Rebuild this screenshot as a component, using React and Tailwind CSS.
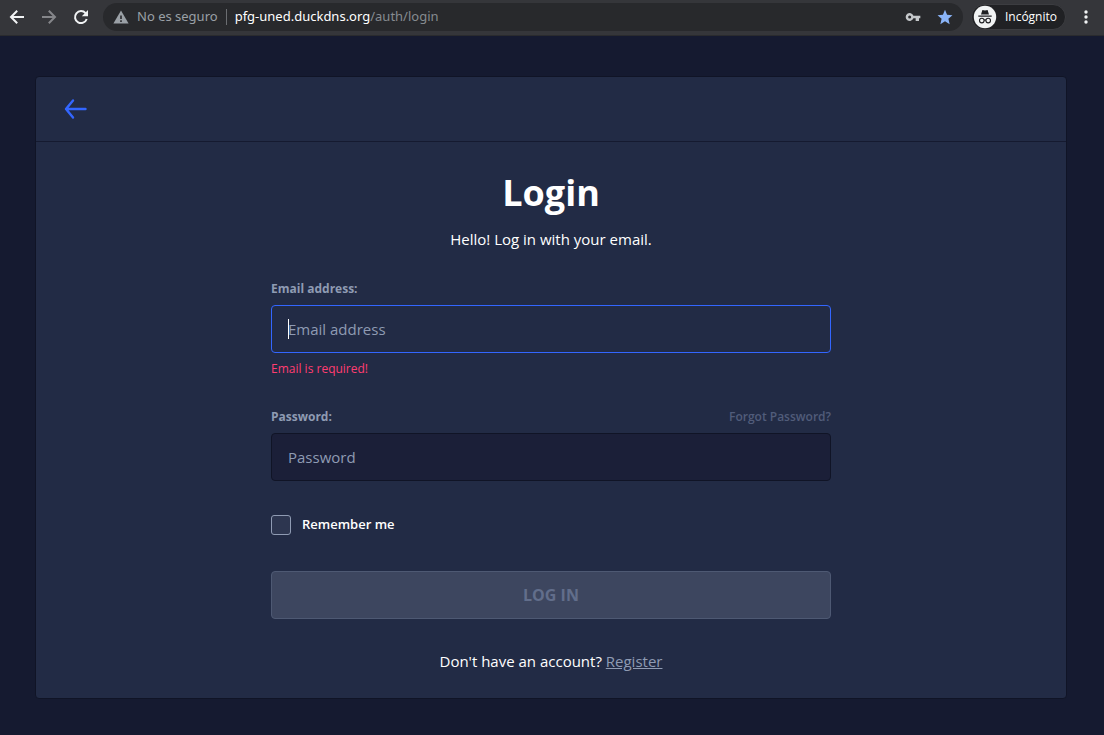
import React from "react";

function BrowserBar() {
  return (
    <header className="flex h-9 shrink-0 items-center border-b border-[#2a2b2e] bg-[#35363a] pr-2.5 pb-px pl-[9px] font-['Noto_Sans',sans-serif]">
      <button type="button" aria-label="Atrás" className="flex size-4 items-center justify-center">
        <svg viewBox="0 0 16 16" className="size-4" fill="none" stroke="#f1f3f4" strokeWidth="2">
          <path d="M15 8H3M8.2 1.8 2 8l6.2 6.2" />
        </svg>
      </button>
      <button type="button" aria-label="Adelante" className="ml-4 flex size-4 items-center justify-center">
        <svg viewBox="0 0 16 16" className="size-4" fill="none" stroke="#85868a" strokeWidth="2">
          <path d="M1 8H13M7.8 1.8 14 8l-6.2 6.2" />
        </svg>
      </button>
      <button type="button" aria-label="Recargar" className="ml-4 flex size-4 items-center justify-center">
        <svg viewBox="0 0 16 16" className="size-4">
          <path d="M12.6 4.2A6 6 0 1 0 13.7 10" fill="none" stroke="#f1f3f4" strokeWidth="2" />
          <path d="M15 1v6.2H8.8z" fill="#f1f3f4" />
        </svg>
      </button>
      <div className="ml-3.5 flex h-7 flex-1 items-center rounded-full bg-[#28292c] px-2.5 text-[13px]">
        <svg viewBox="0 0 16 14" className="h-3.5 w-4" aria-hidden="true">
          <path d="M8 0.5 15.6 13.5H0.4z" fill="#9aa0a6" />
          <path d="M7.2 5.5h1.6v3.6H7.2zM7.2 10.3h1.6v1.6H7.2z" fill="#28292c" />
        </svg>
        <span className="ml-2 text-[#9aa0a6]">No es seguro</span>
        <span className="mx-2 h-4 w-px bg-[#6b6d71]" />
        <span className="flex-1 text-[#868b90]">
          <span className="text-white">pfg-uned.duckdns.org</span>/auth/login
        </span>
        <button type="button" aria-label="Contraseñas">
          <svg viewBox="0 0 24 24" className="size-4" fill="#c4c7ca">
            <path d="M12.65 10A6 6 0 1 0 12.65 14H16v4h5v-4h2v-4zM7 14.3a2.3 2.3 0 1 1 0-4.6 2.3 2.3 0 0 1 0 4.6z" />
          </svg>
        </button>
        <button type="button" aria-label="Favorito" className="ml-4">
          <svg viewBox="0 0 24 24" className="size-4" fill="#8ab4f8">
            <path d="M12 18.2 19 22.8 17.1 14.8 23.2 9.4 15.1 8.7 12 1.2 8.9 8.7 0.8 9.4 6.9 14.8 5 22.8z" />
          </svg>
        </button>
      </div>
      <button type="button" className="ml-2 flex h-[26px] items-center rounded-full border border-[#3c3d41] bg-[#202124] pr-2 pl-px font-['Open_Sans',sans-serif] text-xs text-white">
        <svg viewBox="0 0 24 24" className="mr-2 size-6" aria-hidden="true">
          <circle cx="12" cy="12" r="11.2" fill="#f1f3f4" />
          <path d="M8 9.6 9.4 5 12 5.6 14.6 5 16 9.6zM5.3 10.6h13.4v1.2H5.3z" fill="#202124" />
          <g fill="none" stroke="#202124" strokeWidth="1.1">
            <circle cx="8.8" cy="15.6" r="2.3" />
            <circle cx="15.2" cy="15.6" r="2.3" />
            <path d="M11 15.2q1-.6 2 0" />
          </g>
        </svg>
        Incógnito
      </button>
      <button type="button" aria-label="Menú" className="ml-3">
        <svg viewBox="0 0 16 16" className="size-4" fill="#f1f3f4">
          <circle cx="8" cy="3" r="1.7" />
          <circle cx="8" cy="8" r="1.7" />
          <circle cx="8" cy="13" r="1.7" />
        </svg>
      </button>
    </header>
  );
}

export default function App() {
  return (
    <div className="flex min-h-screen flex-col bg-[#151a30] font-['Open_Sans',sans-serif] text-white">
      <BrowserBar />
      <main className="pt-10 pr-[37px] pb-9 pl-[35px]">
        <section className="rounded border border-[#101426] bg-[#222b45]">
          <nav className="flex h-[65px] items-center border-b border-[#151a30] px-6">
            <a href="#back" aria-label="Back" className="p-1">
              <svg viewBox="0 0 24 24" className="h-6 w-6" fill="none" stroke="#3366ff" strokeWidth="2.4" strokeLinecap="round" strokeLinejoin="round">
                <path d="M21.5 12H2M9 3.5 2 12l7 8.5" />
              </svg>
            </a>
          </nav>
          <form className="mx-auto max-w-[560px] pt-[27px] pb-[25px]" onSubmit={(e) => e.preventDefault()}>
            <h1 className="text-center text-4xl/12 font-bold">Login</h1>
            <p className="mt-2.5 text-center text-[15px]/6">Hello! Log in with your email.</p>

            <div className="mt-[26px]">
              <label htmlFor="email" className="block text-xs/6 font-bold text-[#8f9bb3]">
                Email address:
              </label>
              <div className="relative mt-1">
                <input
                  id="email"
                  type="email"
                  placeholder="Email address"
                  className="block h-12 w-full rounded border border-[#3366ff] bg-[#222b45] px-4 text-[15px] outline-none placeholder:text-[#8f9bb3]"
                />
                <span className="absolute top-3.5 left-[17px] h-5 w-px bg-white" />
              </div>
              <p className="mt-1 text-xs/6 text-[#ff3d71]">Email is required!</p>
            </div>

            <div className="mt-6">
              <div className="flex justify-between text-xs/6">
                <label htmlFor="password" className="font-bold text-[#8f9bb3]">
                  Password:
                </label>
                <a href="#forgot" className="font-semibold text-[#515c7a]">
                  Forgot Password?
                </a>
              </div>
              <input
                id="password"
                type="password"
                placeholder="Password"
                className="mt-1 block h-12 w-full rounded border border-[#101426] bg-[#1b1f38] px-4 text-[15px] outline-none placeholder:text-[#8f9bb3]"
              />
            </div>

            <label className="mt-8 flex h-6 items-center gap-[11px] text-[13px] font-semibold">
              <input type="checkbox" className="size-5 appearance-none rounded-[3px] border border-[#8f9bb3] bg-[#2d3650]" />
              Remember me
            </label>

            <button type="submit" disabled className="mt-[34px] block h-12 w-full rounded border border-[#4e5973] bg-[#3d465f] text-base font-bold text-[#626e8b]">
              LOG IN
            </button>

            <p className="mt-[30px] text-center text-[15px]/6">
              Don't have an account?{" "}
              <a href="#register" className="text-[#8f9bb3] underline">
                Register
              </a>
            </p>
          </form>
        </section>
      </main>
    </div>
  );
}
